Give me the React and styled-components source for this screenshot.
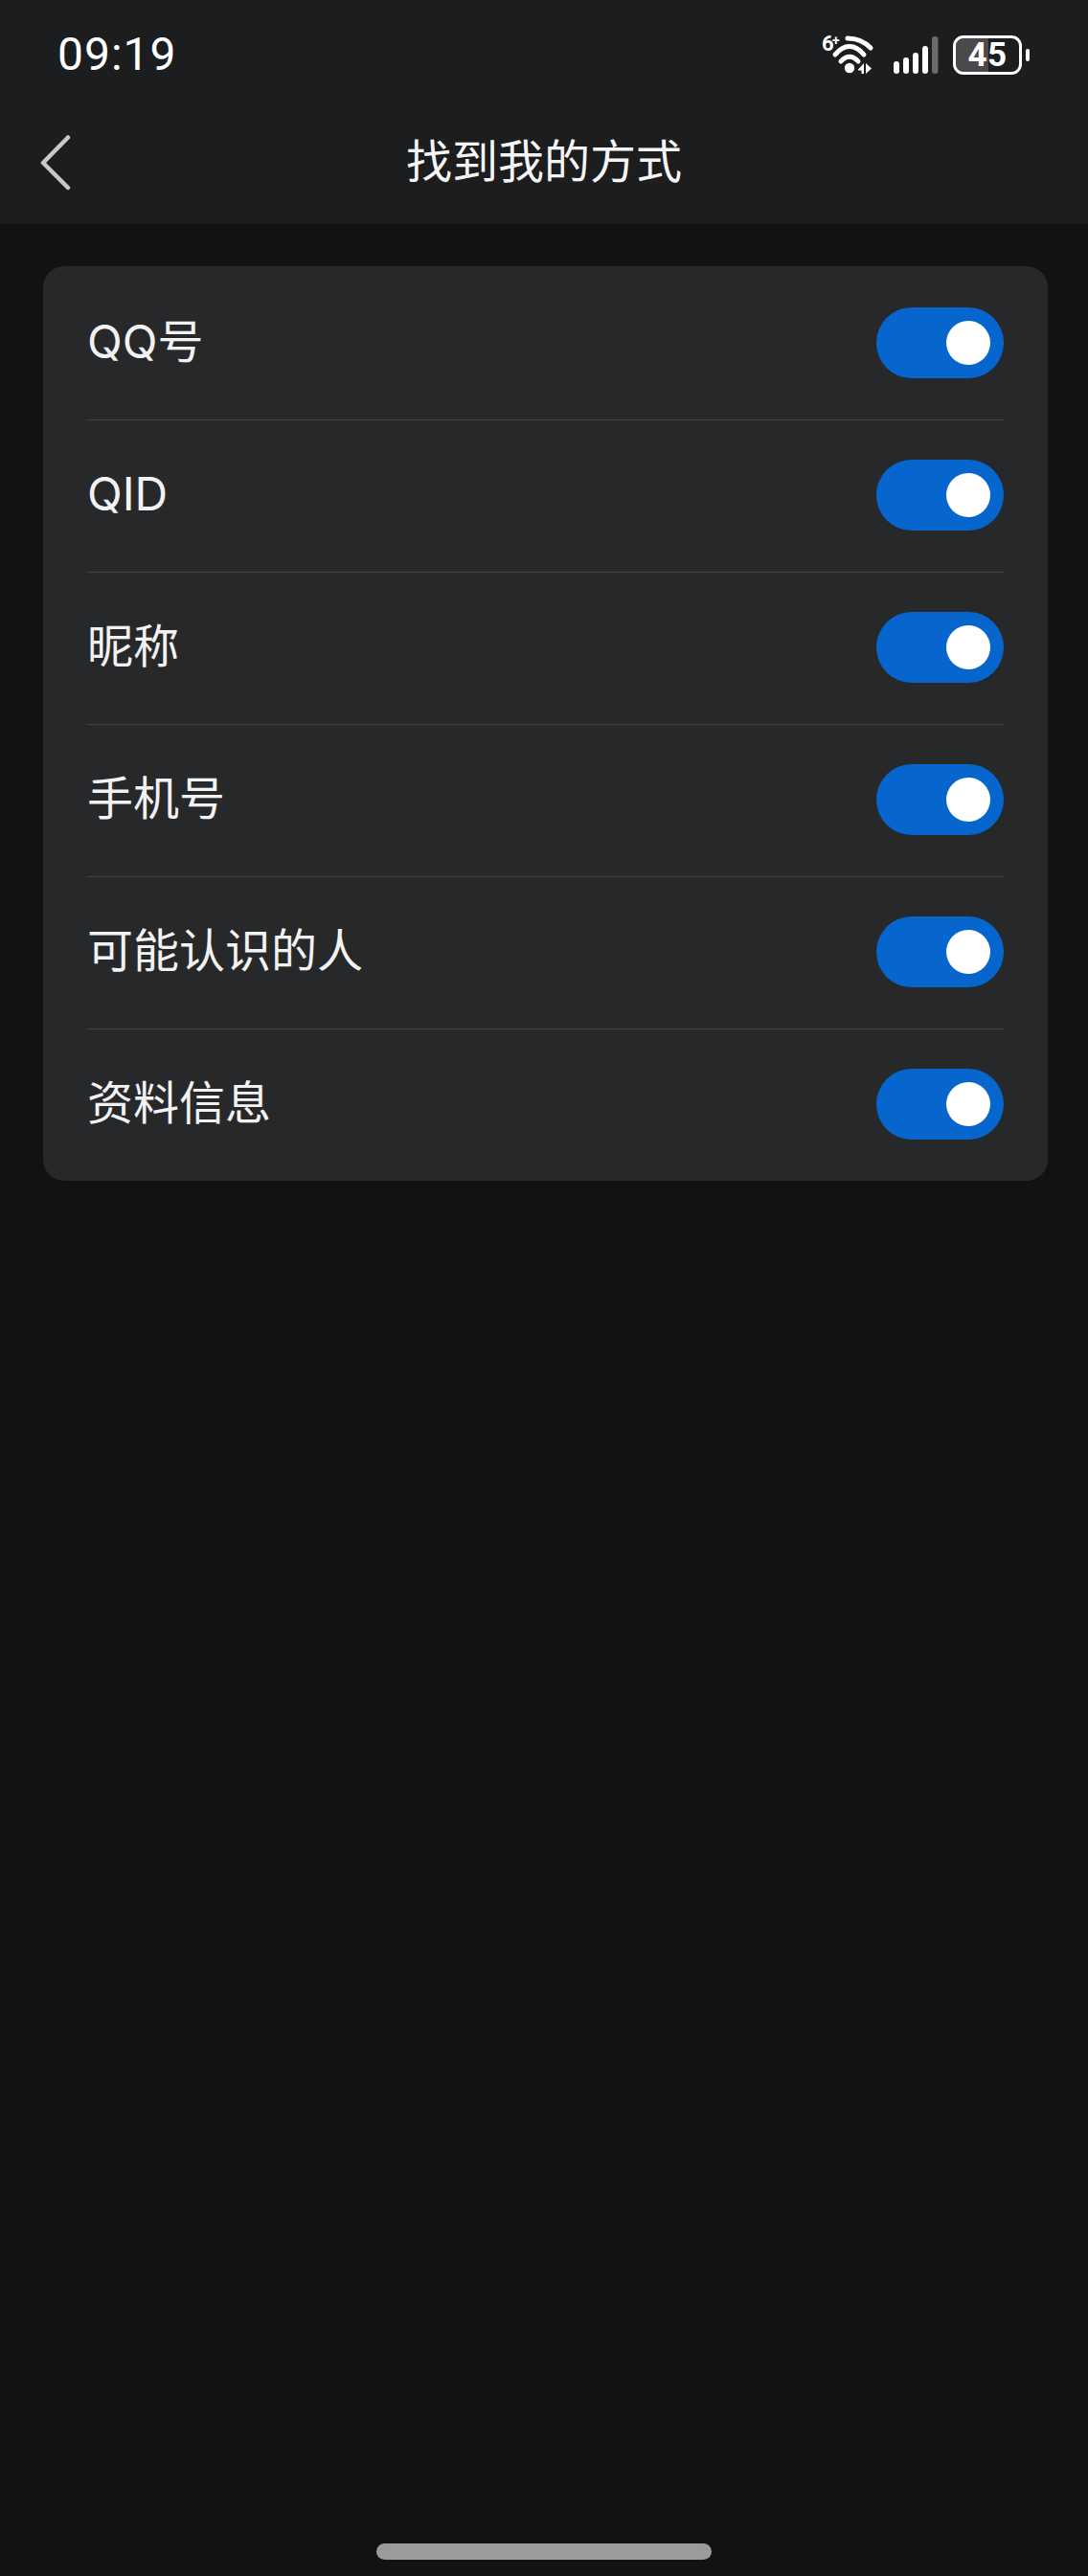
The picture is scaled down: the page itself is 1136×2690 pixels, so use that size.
import React from "react";
import styled, { createGlobalStyle } from "styled-components";

const Global = createGlobalStyle`
  html, body { margin: 0; padding: 0; background: #111214; }
  * { box-sizing: border-box; }
`;
const CJK = `"Noto Sans CJK SC", "Noto Sans", sans-serif`;

const Page = styled.div`
  width: 1136px; height: 2690px; background: #111214; display: flex; flex-direction: column;
  font-family: ${CJK}; color: #f2f2f3;
`;
const Header = styled.header`
  height: 234px; background: #1c1d1f; display: flex; flex-direction: column; flex: none;
`;
const StatusBar = styled.div`
  height: 114px; padding: 0 61px 0 60px; display: flex; align-items: center; justify-content: space-between;
`;
const Time = styled.span`
  font-family: "Roboto", "Noto Sans", sans-serif; font-size: 48px; font-weight: 400; letter-spacing: 1px; color: #fff; line-height: 1;
`;
const StatusIcons = styled.div`
  display: flex; align-items: center; height: 41px;
`;
const Wifi = styled.svg`
  width: 54px; height: 42px; margin-right: 20px; display: block; overflow: visible;
`;
const Signal = styled.svg`
  width: 48px; height: 39px; margin-right: 14px; display: block;
`;
const Battery = styled.div`
  width: 72px; height: 41px; border: 3.5px solid #fff; border-radius: 11px;
  display: flex; align-items: center; justify-content: center;
  background: linear-gradient(90deg, #4a4a4c 0 52%, transparent 52%); background-clip: padding-box;
  margin-right: 4px;
`;
const BatteryText = styled.span`
  font-family: "Roboto", sans-serif; font-weight: 700; font-size: 35px; line-height: 1; color: #fff; letter-spacing: 0.5px;
`;
const BatteryTip = styled.div`
  width: 4px; height: 13px; border-radius: 2px; background: #fff;
`;
const NavBar = styled.div`
  flex: 1; position: relative; display: flex; align-items: center; justify-content: center; padding-bottom: 18px;
`;
const Back = styled.svg`
  position: absolute; left: 42px; top: 27px; width: 32px; height: 60px;
`;
const Title = styled.h1`
  margin: 0; font-size: 48px; font-weight: 400; line-height: 1; color: #f5f5f6;
`;
const Card = styled.section`
  margin: 44px 42px 0 45px; background: #27282a; border-radius: 22px; padding: 2px 46px 0;
`;
const Row = styled.div`
  height: ${p => (p.$last ? "158px" : "159px")}; padding-bottom: 2px; display: flex; align-items: center; justify-content: space-between;
  border-bottom: ${p => (p.$last ? "none" : "1px solid #414244")};
`;
const Label = styled.span`
  font-family: "Inter", ${CJK}; font-size: 48px; line-height: 1; color: #f2f2f3; padding-bottom: 2px;
`;
const Toggle = styled.div`
  width: 133px; height: 74px; border-radius: 37px; background: #0766cd; display: flex; align-items: center; justify-content: flex-end; padding-right: 14px;
`;
const Knob = styled.div`
  width: 46px; height: 46px; border-radius: 50%; background: #fff;
`;
const HomeBar = styled.div`
  margin: auto auto 17px; width: 350px; height: 17px; border-radius: 8.5px; background: #9b9b9b;
`;

const items = ["QQ号", "QID", "昵称", "手机号", "可能认识的人", "资料信息"];

export default function App() {
  return (
    <Page>
      <Global />
      <Header>
        <StatusBar>
          <Time>09:19</Time>
          <StatusIcons>
            <Wifi viewBox="0 0 54 42" fill="none">
              <text x="-1" y="17" fontFamily="Roboto, sans-serif" fontWeight="700" fontSize="22" fill="#fff">6</text>
              <text x="10" y="11" fontFamily="Roboto, sans-serif" fontWeight="700" fontSize="14" fill="#fff">+</text>
              <path d="M26 4C35 4 44 8 50 14" stroke="#fff" strokeWidth="5" strokeLinecap="round" />
              <path d="M13 21C22 9.500 34 9.500 43 21" stroke="#fff" strokeWidth="5" strokeLinecap="round" />
              <path d="M19 28C24.500 21.500 31.500 21.500 37 28" stroke="#fff" strokeWidth="5" strokeLinecap="round" />
              <circle cx="28" cy="35" r="5.200" fill="#fff" />
              <path d="M37 36.500L43 30V41H40.500V37.500H37Z" fill="#fff" />
              <path d="M45 30L51 35.500 45 41Z" fill="#fff" />
            </Wifi>
            <Signal viewBox="0 0 48 39" fill="#fff">
              <rect x="0" y="26" width="6" height="13" rx="3" />
              <rect x="10" y="22" width="6" height="17" rx="3" />
              <rect x="20" y="17" width="6" height="22" rx="3" />
              <rect x="30" y="10" width="6" height="29" rx="3" />
              <rect x="40" y="0" width="6.500" height="39" rx="3" fill="#6b6b6d" />
            </Signal>
            <Battery>
              <BatteryText>45</BatteryText>
            </Battery>
            <BatteryTip />
          </StatusIcons>
        </StatusBar>
        <NavBar>
          <Back viewBox="0 0 32 60" fill="none">
            <path d="M29 2.500L3 29 29 55" stroke="#c9c9ca" strokeWidth="4.500" strokeLinecap="round" strokeLinejoin="round" />
          </Back>
          <Title>找到我的方式</Title>
        </NavBar>
      </Header>
      <Card>
        {items.map((t, i) => (
          <Row key={t} $last={i === items.length - 1}>
            <Label>{t}</Label>
            <Toggle><Knob /></Toggle>
          </Row>
        ))}
      </Card>
      <HomeBar />
    </Page>
  );
}
